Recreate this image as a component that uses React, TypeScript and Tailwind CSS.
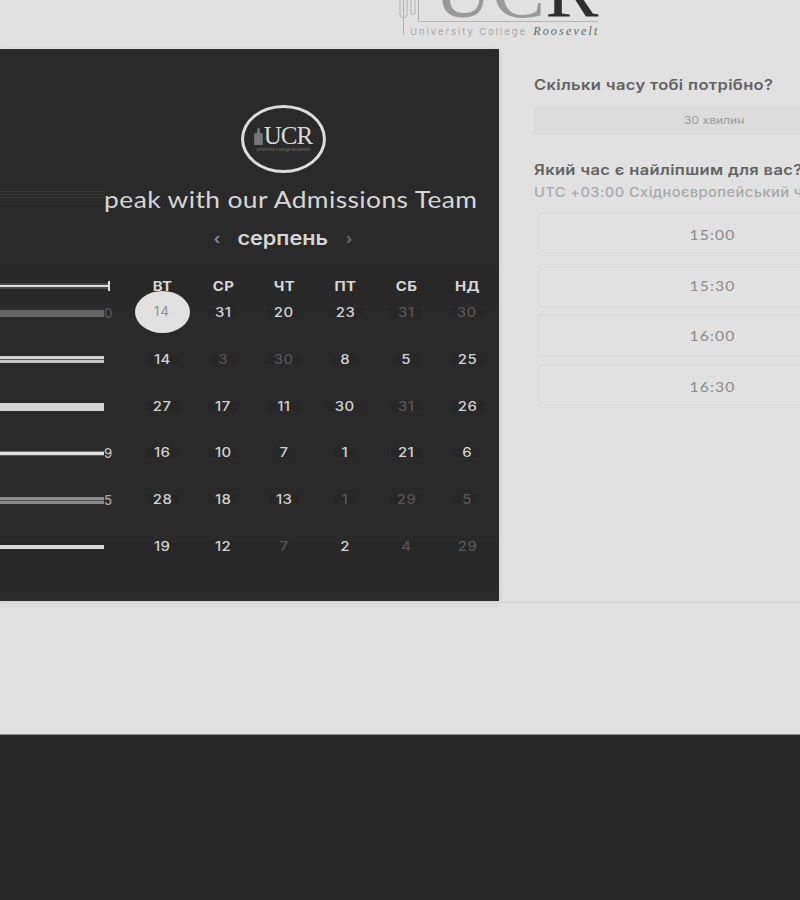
import React from 'react';

const weekDays = ['ВТ', 'СР', 'ЧТ', 'ПТ', 'СБ', 'НД'];

// m = muted day from another month
const weeks: { label: string; m?: boolean }[][] = [
  [{ label: '14' }, { label: '31' }, { label: '20' }, { label: '23' }, { label: '31', m: true }, { label: '30', m: true }],
  [{ label: '14' }, { label: '3', m: true }, { label: '30', m: true }, { label: '8' }, { label: '5' }, { label: '25' }],
  [{ label: '27' }, { label: '17' }, { label: '11' }, { label: '30' }, { label: '31', m: true }, { label: '26' }],
  [{ label: '16' }, { label: '10' }, { label: '7' }, { label: '1' }, { label: '21' }, { label: '6' }],
  [{ label: '28' }, { label: '18' }, { label: '13' }, { label: '1', m: true }, { label: '29', m: true }, { label: '5', m: true }],
  [{ label: '19' }, { label: '12' }, { label: '7', m: true }, { label: '2' }, { label: '4', m: true }, { label: '29', m: true }],
];

const times = ['15:00', '15:30', '16:00', '16:30'];

const Streak: React.FC<{ bars: string[]; digit?: string; digitClass?: string }> = ({ bars, digit, digitClass }) => (
  <div className="flex items-center h-full">
    <div className="w-[104px] flex flex-col shrink-0">
      {bars.map((b, i) => <div key={i} className={b} />)}
    </div>
    {digit && <span className={`text-[13px] font-medium leading-none ${digitClass}`}>{digit}</span>}
  </div>
);

const streaks = [
  { bars: ['h-[7px] bg-[#666666]'], digit: '0', digitClass: 'text-[#555555]' },
  { bars: ['h-[3px] bg-[#d4d4d4]', 'h-px bg-[#555555]', 'h-[3px] bg-[#c4c4c4]'] },
  { bars: ['h-[8px] bg-[#d2d2d2]'] },
  { bars: ['h-px bg-[#777777]', 'h-[3px] bg-[#e0e0e0]', 'h-px bg-[#555555]'], digit: '9', digitClass: 'text-[#bbbbbb]' },
  { bars: ['h-[3px] bg-[#8c8c8c]', 'h-px bg-[#555555]', 'h-[3px] bg-[#8c8c8c]'], digit: '5', digitClass: 'text-[#aaaaaa]' },
  { bars: ['h-[4px] bg-[#d8d8d8]'] },
];

const App: React.FC = () => {
  return (
    <div className="w-[800px] h-[900px] overflow-hidden flex flex-col bg-[#e1e1e1] font-['Inter','Liberation_Sans',sans-serif]">
      {/* top logo, cropped by the window */}
      <header className="h-[49px] shrink-0 flex justify-start pl-[399px] overflow-hidden">
        <div className="relative w-[202px] h-[37px] shrink-0">
          <svg className="absolute left-0 top-0" width="22" height="37" viewBox="0 0 22 37" fill="none" stroke="#b0b0b0" strokeWidth="1">
            <path d="M4.500 0V35M1 0V14Q1 18 4.500 18M8 0V14Q8 18 4.500 18M12 0V14H16V0M19.500 0V21" />
          </svg>
          <div className="absolute left-[19px] right-[3px] top-[21px] h-px bg-[#b4b4b4]" />
          <div className="absolute left-[35px] bottom-[17px] flex font-['Liberation_Serif',serif] text-[80px] leading-[60px]">
            <span className="text-[#9a9a9a]">UC</span>
            <span className="text-[#2f2f2f]">R</span>
          </div>
          <div className="absolute left-[11px] top-[22px] flex items-baseline gap-[6px] whitespace-nowrap">
            <span className="text-[9.5px] tracking-[1.95px] text-[#a8a8a8]">University College</span>
            <span className="font-['Liberation_Serif',serif] italic text-[12px] tracking-[2.2px] text-[#666666]">Roosevelt</span>
          </div>
        </div>
      </header>

      <main className="h-[552px] shrink-0 flex">
        <section className="w-[499px] shrink-0 bg-[#2a2a2a] shadow-[0_2px_6px_rgba(0,0,0,0.12)] flex flex-col pt-[56px] overflow-hidden">
          <div className="flex justify-center pl-[67px]">
            <div className="w-[85px] h-[68px] rounded-[50%] border-[3px] border-[#dcdcdc] flex flex-col items-center justify-center">
              <div className="flex items-end gap-px">
                <svg width="9" height="17" viewBox="0 0 8 16" fill="#777777"><path d="M3 0h2l.5 5H8v11H0V5h2.500z" /></svg>
                <span className="font-['Liberation_Serif',serif] text-[25px] leading-[18px] text-[#d8d8d8] tracking-[-1px]">UCR</span>
              </div>
              <span className="mt-[2px] text-[4px] leading-[5px] text-[#777777] whitespace-nowrap">University College Roosevelt</span>
            </div>
          </div>

          <div className="relative flex justify-end pr-[22px] mt-[10px] h-[34px] items-center">
            <div className="absolute left-0 top-[8px] w-[104px] flex flex-col gap-[2px]">
              <div className="h-px bg-[#383838]" />
              <div className="h-px bg-[#333333]" />
              <div className="h-px bg-[#363636]" />
              <div className="h-px bg-[#303030]" />
              <div className="h-px bg-[#303030]" />
            </div>
            <h1 className="origin-right scale-x-[1.123] text-[23.5px] font-normal leading-none tracking-[0.35px] text-[#d6d6d6] whitespace-nowrap font-['Lato',sans-serif]">peak with our Admissions Team</h1>
          </div>

          <div className="flex justify-center items-center pl-[67px] gap-[23px] mt-[6px] h-[30px]">
            <span className="text-[#888888] text-[15px] font-bold leading-none">‹</span>
            <span className="scale-x-[1.14] text-[#d6d6d6] text-[19px] font-semibold leading-none">серпень</span>
            <span className="text-[#666666] text-[15px] font-bold leading-none">›</span>
          </div>

          <div className="grid grid-cols-[131.5px_repeat(6,61px)] h-[38px] mt-[14px] items-center bg-[#282828]">
            <div className="relative h-[10px] flex items-center">
              <div className="w-[108px] h-[2px] bg-[#dddddd] shadow-[0_0_0_2px_#4a4a4a]" />
              <div className="w-[2px] h-[10px] bg-[#dddddd]" />
            </div>
            {weekDays.map(d => (
              <div key={d} className="scale-x-[1.15] text-center text-[13px] font-bold leading-none text-[#d8d8d8] tracking-[0.3px]">{d}</div>
            ))}
          </div>

          <div className="flex flex-col pt-[3px]">
            {weeks.map((week, w) => (
              <div key={w} className={`grid grid-cols-[131.5px_repeat(6,61px)] h-[46.75px] ${w === 5 ? 'bg-[#282828]' : ''}`}>
                <div className="h-[8px] self-start translate-y-[1px]">
                  <Streak {...streaks[w]} />
                </div>
                {week.map((day, i) => (
                  <div key={i} className="flex justify-center items-start relative">
                    {w === 0 && i === 0 ? (
                      <span className="absolute left-[3px] top-[-17px] w-[55px] h-[42px] rounded-[50%] bg-[#e1e1e1] flex items-center justify-center text-[13px] text-[#8e8e8e] tracking-[1.2px]">{day.label}</span>
                    ) : (
                      <span className={`scale-x-[1.15] text-[13px] font-medium leading-[9px] px-[6px] tracking-[0.4px] bg-[#272727] ${day.m ? 'text-[#555555]' : 'text-[#d2d2d2]'}`}>{day.label}</span>
                    )}
                  </div>
                ))}
              </div>
            ))}
          </div>
        </section>

        <section className="w-[360px] shrink-0 ml-[35px] pt-[27px] flex flex-col">
          <h2 className="origin-left scale-x-[1.14] text-[14.5px] font-semibold leading-[18px] tracking-[0.3px] text-[#636363] whitespace-nowrap">Скільки часу тобі потрібно?</h2>
          <div className="mt-[13px] h-[27px] rounded-[2px] border border-[#d8d8d8] bg-[#dcdcdc] flex items-center justify-center">
            <span className="scale-x-[1.15] text-[10.5px] text-[#9a9a9a]">30 хвилин</span>
          </div>
          <h2 className="origin-left scale-x-[1.14] mt-[27px] text-[14.5px] font-semibold leading-[18px] tracking-[0.3px] text-[#636363] whitespace-nowrap">Який час є найліпшим для вас?</h2>
          <p className="origin-left scale-x-[1.13] mt-[5px] text-[13px] font-medium leading-[16px] tracking-[0.35px] text-[#a8a8a8] whitespace-nowrap">UTC +03:00 Східноєвропейський час</p>
          <div className="mt-[13px] ml-[4px] w-[348px] flex flex-col gap-[7.500px]">
            {times.map(t => (
              <div key={t} className="h-[43px] rounded-[3px] border border-[#d9d9d9] flex items-center justify-center">
                <span className="scale-x-[1.12] text-[14px] tracking-[1px] text-[#8a8a8a] font-['Lato',sans-serif]">{t}</span>
              </div>
            ))}
          </div>
        </section>
      </main>

      <div className="h-[2px] shrink-0 bg-[#d8d8d8]" />
      <div className="flex-1" />
      <footer className="h-[166px] shrink-0 bg-[#292929] border-t border-[#8a8a8a]" />
    </div>
  );
};

export default App;
